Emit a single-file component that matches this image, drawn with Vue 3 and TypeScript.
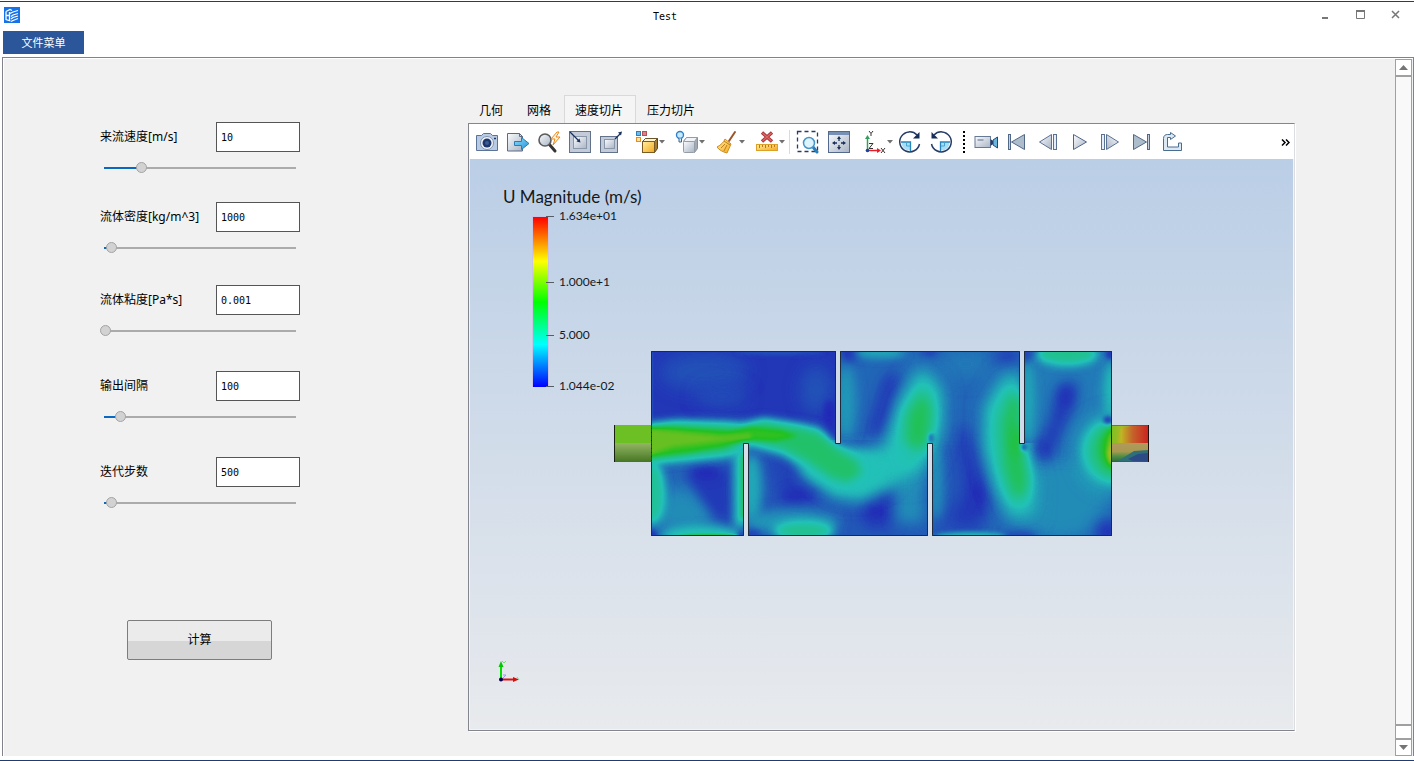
<script setup lang="ts">
import { ref } from 'vue'

interface Field {
  id: string
  label: string
  value: string
  slider: number
}

interface Tool {
  id: string
  title: string
  kind: 'plain' | 'menu' | 'rule' | 'grip'
}

interface Patch {
  d: string
  v: number
  blur: number
  clip?: string
}

const fields = ref<Field[]>([
  { id: 'velocity', label: '来流速度[m/s]', value: '10', slider: 19 },
  { id: 'density', label: '流体密度[kg/m^3]', value: '1000', slider: 3 },
  { id: 'viscosity', label: '流体粘度[Pa*s]', value: '0.001', slider: 0 },
  { id: 'interval', label: '输出间隔', value: '100', slider: 8 },
  { id: 'steps', label: '迭代步数', value: '500', slider: 3 },
])

const tabs = ['几何', '网格', '速度切片', '压力切片']
const activeTab = ref('速度切片')

const tools: Tool[] = [
  { id: 'camera', title: '截图', kind: 'plain' },
  { id: 'export', title: '导出', kind: 'plain' },
  { id: 'quick', title: '快速缩放', kind: 'plain' },
  { id: 'shrink', title: '还原视图', kind: 'plain' },
  { id: 'expand', title: '放大视图', kind: 'plain' },
  { id: 'cube', title: '显示方式', kind: 'menu' },
  { id: 'light', title: '光照', kind: 'menu' },
  { id: 'broom', title: '清除', kind: 'menu' },
  { id: 'ruler', title: '测量', kind: 'menu' },
  { id: 'rule', title: '', kind: 'rule' },
  { id: 'zoombox', title: '框选缩放', kind: 'plain' },
  { id: 'fit', title: '适应窗口', kind: 'plain' },
  { id: 'axes', title: '视图方向', kind: 'menu' },
  { id: 'cw', title: '顺时针旋转', kind: 'plain' },
  { id: 'ccw', title: '逆时针旋转', kind: 'plain' },
  { id: 'grip', title: '', kind: 'grip' },
  { id: 'video', title: '录制', kind: 'plain' },
  { id: 'first', title: '首帧', kind: 'plain' },
  { id: 'prev', title: '上一帧', kind: 'plain' },
  { id: 'play', title: '播放', kind: 'plain' },
  { id: 'next', title: '下一帧', kind: 'plain' },
  { id: 'last', title: '末帧', kind: 'plain' },
  { id: 'share', title: '循环', kind: 'plain' },
]

const legend = [
  { y: 216, text: '1.634e+01' },
  { y: 282, text: '1.000e+1' },
  { y: 335, text: '5.000' },
  { y: 386, text: '1.044e-02' },
]

const oval = (cx: number, cy: number, rx: number, ry: number): string =>
  `M${cx - rx} ${cy}a${rx} ${ry} 0 1 0 ${rx * 2} 0a${rx} ${ry} 0 1 0 ${-rx * 2} 0Z`
const box = (x: number, y: number, w: number, h: number): string => `M${x} ${y}h${w}v${h}h${-w}Z`

/* Speed as a share of the maximum; the colour map filter turns it into a hue. */
const patches: Patch[] = [
  { d: box(640, 340, 480, 210), v: 0.11, blur: 0 },
  // upper left chamber
  { d: box(640, 340, 198, 110), v: 0.035, blur: 0, clip: 't1' },
  { d: oval(704, 372, 44, 18), v: 0.08, blur: 9, clip: 't1' },
  { d: oval(722, 396, 26, 12), v: 0.065, blur: 8, clip: 't1' },
  { d: oval(780, 352, 44, 3), v: 0.08, blur: 2, clip: 't1' },
  { d: oval(816, 390, 16, 24), v: 0.08, blur: 8, clip: 't1' },
  { d: oval(829, 412, 4, 12), v: 0.005, blur: 3, clip: 't1' },
  { d: box(649, 350, 3, 70), v: 0.12, blur: 1, clip: 't1' },
  // lower left chamber
  { d: oval(684, 512, 34, 24), v: 0.17, blur: 8, clip: 'b1' },
  { d: 'M684 470L730 466L732 522L716 520L698 496Z', v: 0.04, blur: 6, clip: 'b1' },
  { d: oval(706, 473, 14, 6), v: 0.01, blur: 5, clip: 'b1' },
  { d: oval(652, 492, 13, 32), v: 0.3, blur: 4, clip: 'b1' },
  { d: box(735, 450, 12, 76), v: 0.28, blur: 4, clip: 'b1' },
  { d: box(741, 452, 8, 66), v: 0.4, blur: 2, clip: 'b1' },
  { d: oval(702, 536, 40, 10), v: 0.26, blur: 4, clip: 'b1' },
  { d: oval(708, 537, 32, 3), v: 0.48, blur: 1, clip: 'b1' },
  { d: oval(652, 535, 5, 5), v: 0.03, blur: 2, clip: 'b1' },
  { d: oval(742, 535, 4, 4), v: 0.06, blur: 2, clip: 'b1' },
  // lower middle chamber
  { d: box(746, 440, 182, 100), v: 0.09, blur: 0, clip: 'b2' },
  { d: 'M766 452L786 460L826 492L806 504L782 508Z', v: 0.05, blur: 7, clip: 'b2' },
  { d: oval(797, 495, 15, 6), v: 0.02, blur: 5, clip: 'b2' },
  { d: oval(752, 488, 10, 34), v: 0.21, blur: 5, clip: 'b2' },
  { d: oval(792, 522, 48, 12), v: 0.19, blur: 6, clip: 'b2' },
  { d: oval(804, 531, 30, 9), v: 0.32, blur: 5, clip: 'b2' },
  { d: oval(850, 500, 28, 8), v: 0.1, blur: 6, clip: 'b2' },
  { d: oval(877, 512, 16, 16), v: 0.02, blur: 8, clip: 'b2' },
  { d: oval(886, 494, 9, 9), v: 0.04, blur: 6, clip: 'b2' },
  { d: box(896, 455, 28, 68), v: 0.17, blur: 7, clip: 'b2' },
  { d: oval(752, 535, 9, 5), v: 0.05, blur: 3, clip: 'b2' },
  // upper middle chamber
  { d: oval(846, 402, 10, 38), v: 0.19, blur: 6, clip: 't2' },
  { d: oval(850, 352, 10, 9), v: 0.03, blur: 4, clip: 't2' },
  { d: 'M886 376L902 374L894 418L880 436L868 434L876 410Z', v: 0.02, blur: 7, clip: 't2' },
  { d: oval(880, 352, 26, 6), v: 0.22, blur: 4, clip: 't2' },
  { d: oval(930, 352, 8, 4), v: 0.01, blur: 4, clip: 't2' },
  { d: oval(966, 364, 28, 14), v: 0.14, blur: 9, clip: 't2' },
  { d: oval(1008, 358, 12, 9), v: 0.03, blur: 7, clip: 't2' },
  // lower right chamber
  { d: box(932, 445, 50, 90), v: 0.09, blur: 5, clip: 'b3' },
  { d: 'M956 425L970 430L984 470L992 500L978 528L944 526L964 490Z', v: 0.035, blur: 8, clip: 'b3' },
  { d: oval(980, 492, 5, 14), v: 0.01, blur: 5, clip: 'b3' },
  { d: oval(936, 484, 8, 36), v: 0.17, blur: 5, clip: 'b3' },
  { d: oval(972, 537, 36, 5), v: 0.24, blur: 2, clip: 'b3' },
  { d: oval(1060, 496, 50, 44), v: 0.17, blur: 9, clip: 'b3' },
  { d: oval(1020, 536, 16, 5), v: 0.04, blur: 4, clip: 'b3' },
  { d: oval(1108, 532, 12, 12), v: 0.02, blur: 7, clip: 'b3' },
  // upper right chamber
  { d: box(1024, 350, 90, 104), v: 0.14, blur: 7, clip: 't3' },
  { d: 'M1058 388L1078 382L1072 408L1058 440L1048 462L1036 456L1052 414Z', v: 0.03, blur: 7, clip: 't3' },
  { d: oval(1066, 396, 6, 12), v: 0.02, blur: 6, clip: 't3' },
  { d: oval(1042, 448, 6, 9), v: 0.03, blur: 6, clip: 't3' },
  { d: oval(1028, 402, 7, 42), v: 0.21, blur: 5, clip: 't3' },
  { d: oval(1067, 354, 31, 11), v: 0.32, blur: 5, clip: 't3' },
  { d: oval(1025, 353, 8, 8), v: 0.05, blur: 4, clip: 't3' },
  { d: oval(1112, 392, 9, 30), v: 0.24, blur: 5, clip: 't3' },
  { d: oval(1110, 354, 4, 5), v: 0.03, blur: 2, clip: 't3' },
  // second pass of the jet
  { d: 'M920 360L944 384L944 430L934 460L916 484L892 484L882 450L896 400Z', v: 0.2, blur: 9 },
  { d: 'M922 374L938 392L939 422L930 452L914 470L892 470L892 440L901 406Z', v: 0.28, blur: 7 },
  { d: 'M922 392L931 408L928 440L918 450L906 444L908 414Z', v: 0.41, blur: 6 },
  { d: oval(931, 438, 2, 5), v: 0.04, blur: 2 },
  { d: 'M1004 368L1020 366L1024 440L1038 484L1036 520L1010 526L992 486L982 448L984 402Z', v: 0.2, blur: 9, clip: 'mid' },
  { d: 'M1004 384L1020 378L1022 440L1033 484L1030 510L1012 512L998 486L988 448L988 410Z', v: 0.28, blur: 7, clip: 'mid' },
  { d: 'M1010 396L1020 396L1022 446L1027 474L1025 494L1014 498L1004 466L1002 422Z', v: 0.41, blur: 6, clip: 'mid' },
  { d: oval(1016, 442, 4, 16), v: 0.48, blur: 5, clip: 'mid' },
  { d: oval(1024, 447, 3, 4), v: 0.05, blur: 2 },
  // jet entering from the inlet
  { d: 'M812 448L850 450L904 444L910 466L892 488L860 502L832 496L800 474Z', v: 0.25, blur: 7, clip: 'mid2' },
  { d: 'M640 424L676 420L728 421L742 422L764 418L800 423L820 427L834 444L858 452L878 458L882 474L862 490L838 492L812 476L784 456L748 446L740 456L690 461L640 465Z', v: 0.25, blur: 4 },
  { d: 'M640 428L676 424L728 426L742 428L764 422L800 428L820 434L838 450L856 460L862 472L848 482L832 478L806 460L782 448L748 440L726 452L690 456L640 461Z', v: 0.38, blur: 4 },
  { d: 'M640 428L668 427L728 431L752 427L780 430L798 436L776 441L744 440L722 447L690 452L640 458Z', v: 0.52, blur: 2 },
  { d: 'M640 428L670 431L722 436L750 434L752 438L722 441L672 447L640 458Z', v: 0.61, blur: 2 },
  // outflow
  { d: oval(1112, 452, 36, 40), v: 0.22, blur: 8 },
  { d: oval(1114, 451, 30, 31), v: 0.3, blur: 5 },
  { d: oval(1114, 450, 19, 24), v: 0.41, blur: 4 },
  { d: oval(1114, 448, 11, 19), v: 0.54, blur: 3 },
  { d: 'M1113 428L1107 454L1110 464L1116 464Z', v: 0.72, blur: 2 },
  { d: oval(1108, 420, 5, 4), v: 0.04, blur: 2 },
]

const grey = (v: number): string => {
  const n = Math.round(v * 255)
  return `rgb(${n},${n},${n})`
}
</script>

<template>
  <div class="window">
    <header class="titlebar">
      <svg class="app-icon" viewBox="0 0 16 16" aria-hidden="true">
        <rect width="16" height="16" fill="#1672e8" />
        <path d="M2 4.500L6 2.500L8 3.500M2 4.500V12.500L6.500 14M2 8.500H6M5.500 5V14M6 6.500L9 5L14 3.500M7 9.500L9 8L14 6.500M7 12L9 10.500L14 9M7 14.500L9 13.500L14 11.500" fill="none" stroke="#fff" stroke-width="1.300" />
      </svg>
      <h1>Test</h1>
      <div class="window-controls">
        <button type="button" aria-label="最小化"><svg viewBox="0 0 11 11"><path d="M2 9h6" stroke="#777" stroke-width="2" /></svg></button>
        <button type="button" aria-label="最大化"><svg viewBox="0 0 11 11"><path d="M1.500 2v7.500h8V2" fill="none" stroke="#777" /><path d="M1 2h9" stroke="#777" stroke-width="2" /></svg></button>
        <button type="button" aria-label="关闭"><svg viewBox="0 0 11 11"><path d="M2 2l7 7M9 2l-7 7" stroke="#777" stroke-width="1.500" /></svg></button>
      </div>
    </header>
    <nav class="menubar"><button type="button">文件菜单</button></nav>

    <main class="panel">
      <form class="controls" @submit.prevent>
        <div class="fields">
          <div v-for="f in fields" :key="f.id" class="field">
            <label :for="f.id">{{ f.label }}</label>
            <input :id="f.id" v-model="f.value" type="text" class="value" />
            <input v-model.number="f.slider" type="range" min="0" max="100" class="slider" :aria-label="f.label" :style="{ '--fill': f.slider + '%' }" />
          </div>
        </div>
        <button type="submit" class="compute">计算</button>
      </form>

      <section class="viewer">
        <div class="tabs" role="tablist">
          <button v-for="t in tabs" :key="t" type="button" role="tab" :aria-selected="t === activeTab" :class="{ active: t === activeTab }" @click="activeTab = t">{{ t }}</button>
        </div>
        <div class="frame">
          <div class="toolbar">
            <svg class="defs" width="0" height="0" aria-hidden="true">
              <defs>
                <linearGradient id="steel" x2="1" y2="1"><stop stop-color="#fafcff" /><stop offset="1" stop-color="#a9b4c4" /></linearGradient>
                <linearGradient id="sky" x2="1" y2="1"><stop stop-color="#8fdcfa" /><stop offset="1" stop-color="#2394d8" /></linearGradient>
                <linearGradient id="gold" x2="1" y2="1"><stop stop-color="#fff0a0" /><stop offset="1" stop-color="#f5a81c" /></linearGradient>
              </defs>
            </svg>
            <template v-for="t in tools" :key="t.id">
              <span v-if="t.kind === 'rule'" class="rule"></span>
              <span v-else-if="t.kind === 'grip'" class="grip"></span>
              <button v-else type="button" :class="['tool', t.kind]" :aria-label="t.title">
                <svg class="icon" viewBox="0 0 24 24" aria-hidden="true">
                  <g v-if="t.id === 'camera'">
                    <path d="M1.500 5.500h5l2-2h7l2 2h5v15h-21z" fill="#b9cbe2" stroke="#5c7399" stroke-linejoin="round" />
                    <circle cx="12" cy="13" r="6.500" fill="#f4f7fb" stroke="#8193b0" />
                    <circle cx="12" cy="13" r="4.500" fill="#1d376c" /><circle cx="12" cy="13" r="2" fill="#3c5c94" />
                    <path d="M19 8.500h2" stroke="#1d376c" stroke-width="1.500" />
                  </g>
                  <g v-else-if="t.id === 'export'">
                    <path d="M1.500 3.500h12l3 3v14.500h-15z" fill="url(#steel)" stroke="#5d6b80" />
                    <path d="M13.500 3.500v3h3" fill="none" stroke="#5d6b80" />
                    <path d="M8.500 11.500h7v-4l7.500 6-7.500 6v-4h-7z" fill="url(#sky)" stroke="#2a7cb4" />
                  </g>
                  <g v-else-if="t.id === 'quick'">
                    <path d="M12 14l6 7" stroke="#343434" stroke-width="3" stroke-linecap="round" />
                    <circle cx="8" cy="10" r="6" fill="url(#steel)" stroke="#5c5c5c" stroke-width="1.600" />
                    <path d="M20 2l-6 7h4l-2 6 7-8h-4l3-5z" fill="#fff2d8" stroke="#e68a1d" stroke-linejoin="round" />
                  </g>
                  <g v-else-if="t.id === 'shrink'">
                    <rect x="1.500" y="1.500" width="21" height="21" fill="#c3cbd8" stroke="#63728b" />
                    <rect x="5.500" y="6.500" width="13" height="12" fill="url(#steel)" stroke="#8a97ab" />
                    <path d="M2 2l9 9" stroke="#17305e" stroke-width="1.300" /><path d="M12.500 12.500l-4-1 3-3z" fill="#17305e" />
                  </g>
                  <g v-else-if="t.id === 'expand'">
                    <rect x="1.500" y="6.500" width="17" height="16" fill="#c3cbd8" stroke="#63728b" />
                    <rect x="5.500" y="9.500" width="10" height="9" fill="url(#steel)" stroke="#8a97ab" />
                    <path d="M16 9l5-5" stroke="#17305e" stroke-width="1.300" /><path d="M23 1.500l-4 1 3 3z" fill="#17305e" />
                  </g>
                  <g v-else-if="t.id === 'cube'">
                    <rect x="1.500" y="1.500" width="4" height="4" fill="#70bce8" stroke="#2f7fb8" />
                    <rect x="7.500" y="1.500" width="4" height="4" fill="#d9828a" stroke="#b54f58" />
                    <rect x="1.500" y="7.500" width="4" height="4" fill="#ffe5a5" stroke="#e48d22" />
                    <path d="M7.500 11.500l3-3h12v10l-3 4z" fill="#a47b32" stroke="#574523" />
                    <path d="M7.500 11.500l3-3h12l-3 3z" fill="#fff3cf" stroke="#69562e" />
                    <rect x="7.500" y="11.500" width="12" height="11" fill="url(#gold)" stroke="#7a5b25" />
                  </g>
                  <g v-else-if="t.id === 'light'">
                    <circle cx="5" cy="5" r="3.500" fill="#c6eaff" stroke="#3181c8" stroke-width="1.400" />
                    <path d="M4 8.500v3.500h2.500V8.500" fill="#dce7f0" stroke="#42648a" />
                    <path d="M8.500 11.500l3-4h11v11l-3 4z" fill="#a2aab5" stroke="#87909b" />
                    <path d="M8.500 11.500l3-4h11l-3 4z" fill="#f2f4f7" stroke="#949ca6" />
                    <rect x="8.500" y="11.500" width="11" height="11" rx="1" fill="url(#steel)" stroke="#949ca6" />
                  </g>
                  <g v-else-if="t.id === 'broom'">
                    <path d="M20 2l-6 9" stroke="#9c5527" stroke-width="2" stroke-linecap="round" />
                    <path d="M10 9l6 5-4 9c-4-1-8-3-10-6 4-2 7-5 8-8z" fill="url(#gold)" stroke="#cf8b1c" />
                    <path d="M9 11l6 4M6 18l4-4M9 21l3-6" stroke="#c07e1e" fill="none" />
                  </g>
                  <g v-else-if="t.id === 'ruler'">
                    <rect x="1.500" y="14.500" width="21" height="6" fill="url(#gold)" stroke="#dda029" />
                    <path d="M4.500 15v3M7.500 15v2M10.500 15v3M13.500 15v2M16.500 15v3M19.500 15v2" stroke="#ba7920" />
                    <path d="M7 2.500l10 9M17 2.500l-10 9" stroke="#a83538" stroke-width="3.400" /><path d="M7.500 3l9 8M16.500 3l-9 8" stroke="#df6668" stroke-width="1.500" />
                  </g>
                  <g v-else-if="t.id === 'zoombox'">
                    <rect x="1.500" y="1.500" width="20" height="20" fill="none" stroke="#263b66" stroke-width="1.300" stroke-dasharray="4 3" />
                    <path d="M17 17l4 5" stroke="#287fba" stroke-width="3" stroke-linecap="round" />
                    <circle cx="13" cy="13" r="5.500" fill="#ddf3fe" stroke="#4a94c5" stroke-width="1.500" />
                  </g>
                  <g v-else-if="t.id === 'fit'">
                    <rect x="1.500" y="1.500" width="21" height="21" fill="url(#steel)" stroke="#53698e" />
                    <path d="M2 3.500h20" stroke="#7890b3" stroke-width="3" />
                    <path d="M12 8v3M12 15v3M7 13h3M14 13h3" stroke="#172e58" stroke-width="1.300" />
                    <path d="M12 6l2 3h-4zM12 20l2-3h-4zM5 13l3-2v4zM19 13l-3-2v4z" fill="#172e58" />
                  </g>
                  <g v-else-if="t.id === 'axes'">
                    <path d="M4.500 20V8" stroke="#30a05c" stroke-width="1.500" /><path d="M4.500 5l2.500 4h-5z" fill="#30a05c" />
                    <path d="M5 20.500h10" stroke="#ed1c24" stroke-width="1.500" /><path d="M18 20.500l-4-2.500v5z" fill="#ed1c24" />
                    <circle cx="4.500" cy="20.500" r="1.800" fill="#1e3f9e" />
                    <path d="M6 1l2 2.500L10 1M8 3.500V6M6 13.500h4l-4 5h4M18 18l4 5M22 18l-4 5" fill="none" stroke="#333" />
                  </g>
                  <g v-else-if="t.id === 'cw' || t.id === 'ccw'" :class="{ mirror: t.id === 'ccw' }">
                    <path d="M19 5A10 10 0 1 0 21.500 14" fill="none" stroke="#253b66" stroke-width="1.500" />
                    <path d="M21.500 2v6.500h-6.500z" fill="#172e58" />
                    <path d="M3.500 12H12v8.500C7 20.500 3.500 17 3.500 12z" fill="#a8def5" /><path d="M3 12h9.500v9" fill="none" stroke="#2785bb" stroke-width="1.300" /><path d="M8.500 12.500v3.500H12" fill="none" stroke="#45a4d4" />
                  </g>
                  <g v-else-if="t.id === 'video'">
                    <rect x="1" y="6.500" width="15.500" height="11" fill="url(#steel)" stroke="#667995" />
                    <path d="M3.500 10h6" stroke="#9ba8ba" stroke-width="2" />
                    <path d="M16.500 9l2.500 2v3l-2.500 2z" fill="#263d68" /><path d="M19 10l4.500-3v11L19 15z" fill="#6ab6dc" stroke="#244773" />
                  </g>
                  <g v-else-if="t.id === 'first' || t.id === 'last'" :class="{ mirror: t.id === 'last' }">
                    <path d="M19.500 4.500v15L6.500 12z" fill="#aebdcb" stroke="#526887" /><rect x="3.500" y="4.500" width="2" height="15" fill="#c7d1dd" stroke="#526887" />
                  </g>
                  <g v-else-if="t.id === 'prev' || t.id === 'next'" :class="{ mirror: t.id === 'next' }">
                    <path d="M15.500 4.500v15L3.500 12z" fill="url(#steel)" stroke="#5b7193" /><rect x="17.500" y="4.500" width="3" height="15" fill="#e5edf7" stroke="#5b7193" />
                  </g>
                  <g v-else-if="t.id === 'play'"><path d="M6.500 4.500v15L19.500 12z" fill="url(#steel)" stroke="#4f6588" /></g>
                  <g v-else-if="t.id === 'share'">
                    <path d="M3.500 8.500c0-3 2-4 4-4h3v-2l5 3.500-5 3.500v-2h-3v9.500h11v-4h3v7.500h-18z" fill="#dce9f3" stroke="#496d90" stroke-linejoin="round" />
                  </g>
                </svg>
                <svg v-if="t.kind === 'menu'" class="caret" viewBox="0 0 6 4" aria-hidden="true"><path d="M0 0h6L3 3.500z" fill="#707070" /></svg>
              </button>
            </template>
            <button type="button" class="more" aria-label="更多工具">
              <svg viewBox="0 0 9 7" aria-hidden="true"><path d="M1 .5l3 3-3 3M5 .5l3 3-3 3" fill="none" stroke="#000" stroke-width="1.500" /></svg>
            </button>
          </div>

          <svg class="scene" viewBox="470 159 823 570" role="img" aria-label="速度切片">
            <defs>
              <linearGradient id="rainbow" x1="0" y1="0" x2="0" y2="1">
                <stop stop-color="#f00" /><stop offset=".26" stop-color="#ff0" /><stop offset=".5" stop-color="#0f0" /><stop offset=".75" stop-color="#0ff" /><stop offset="1" stop-color="#00f" />
              </linearGradient>
              <linearGradient id="pipe" x1="0" y1="0" x2="0" y2="1"><stop stop-color="#93b663" /><stop offset="1" stop-color="#467623" /></linearGradient>
              <linearGradient id="hot"><stop stop-color="#6cc024" /><stop offset=".25" stop-color="#c0b524" /><stop offset=".55" stop-color="#c4642a" /><stop offset="1" stop-color="#cc2020" /></linearGradient>
              <linearGradient id="warm" x1="0" y1="0" x2="0" y2="1"><stop stop-color="#b09a5c" /><stop offset=".45" stop-color="#a89850" /><stop offset=".7" stop-color="#4f8f45" /><stop offset="1" stop-color="#30683c" /></linearGradient>
              <filter id="map" x="0" y="0" width="1" height="1" color-interpolation-filters="sRGB">
                <feComponentTransfer>
                  <feFuncR type="table" tableValues=".13 .13 .13 .75 .78" />
                  <feFuncG type="table" tableValues=".13 .76 .76 .75 .13" />
                  <feFuncB type="table" tableValues=".72 .72 .13 .13 .13" />
                </feComponentTransfer>
              </filter>
              <filter v-for="n in 9" :id="'blur' + n" :key="n" filterUnits="userSpaceOnUse" x="600" y="300" width="560" height="290" color-interpolation-filters="sRGB"><feGaussianBlur :stdDeviation="n" /></filter>
              <clipPath id="t1"><rect x="640" y="340" width="198" height="110" /></clipPath>
              <clipPath id="t2"><rect x="838" y="340" width="184" height="120" /></clipPath>
              <clipPath id="t3"><rect x="1022" y="340" width="100" height="150" /></clipPath>
              <clipPath id="b1"><rect x="640" y="440" width="106" height="100" /></clipPath>
              <clipPath id="b2"><rect x="746" y="440" width="184" height="100" /></clipPath>
              <clipPath id="b3"><path d="M930 400H1022V440H1122V540H930Z" /></clipPath>
              <clipPath id="mid"><path d="M840 340H1022V443H1122V540H840Z" /></clipPath>
              <clipPath id="mid2"><path d="M746 443H838V400H930V540H746Z" /></clipPath>
              <clipPath id="body"><path d="M651 351H836V443H840V351H1020V443H1024V351H1112V536H932V443H928V536H748V443H744V536H651Z" /></clipPath>
            </defs>

            <g class="legend">
              <text x="503" y="203" class="legend-title">U Magnitude (m/s)</text>
              <rect x="532" y="216" width="17" height="171" fill="#c9c4e6" />
              <rect x="533" y="217" width="15" height="170" fill="url(#rainbow)" />
              <g v-for="l in legend" :key="l.text">
                <path :d="`M546 ${l.y + 0.5}h8`" stroke="#555e66" />
                <text x="559" :y="l.y + 4">{{ l.text }}</text>
              </g>
            </g>

            <g clip-path="url(#body)">
              <g filter="url(#map)">
                <g v-for="(p, i) in patches" :key="i" :clip-path="p.clip ? `url(#${p.clip})` : undefined">
                  <path :d="p.d" :fill="grey(p.v)" :filter="p.blur ? `url(#blur${p.blur})` : undefined" />
                </g>
              </g>
            </g>
            <path d="M836 352h4v91h-4zM1020 352h4v91h-4z" fill="#cfdbe8" /><path d="M744 444h4v92h-4zM928 444h4v92h-4z" fill="#d6dfe9" />
            <path d="M651.500 351.500H835.500V443.500H840.500V351.500H1019.500V443.500H1024.500V351.500H1111.500V535.500H932.500V443.500H927.500V535.500H748.500V443.500H743.500V535.500H651.500Z" fill="none" stroke="#1d2c3c" />

            <rect x="614" y="425" width="37" height="18" fill="#6cc024" />
            <rect x="614" y="443" width="37" height="19" fill="url(#pipe)" />
            <path d="M614.500 425v37" stroke="#182010" />
            <path d="M651.500 425v37" stroke="#2d4a18" stroke-dasharray="3 1" />
            <rect x="1112" y="425" width="37" height="18" fill="url(#hot)" />
            <path d="M1112 425h22l-14 4-5 14h-3z" fill="#8fc024" opacity=".6" />
            <rect x="1112" y="443" width="37" height="19" fill="url(#warm)" />
            <path d="M1116 462l10-6 8-5 15-1v12z" fill="#2f6f78" /><path d="M1128 459l10-5 11-1v9l-16-1z" fill="#2c4a86" />
            <path d="M1112 425.500h37M1112 461.500h37" stroke="#58502c" opacity=".6" />
            <path d="M1148.500 425v37" stroke="#1c1010" /><path d="M1111.500 425v37" stroke="#22301a" stroke-dasharray="3 1" />

            <path d="M501 679v-13" stroke="#00e000" stroke-width="2" /><path d="M501 661l2.500 6h-5z" fill="#00c800" />
            <path d="M501 679.500h14" stroke="#e01010" stroke-width="2" /><path d="M519 679.500l-6-2.500v5z" fill="#d01010" />
            <path d="M502 661l2 2 2-2M517 677l2 3" stroke="#70e070" fill="none" /><path d="M503 675h3l-3 3" fill="none" stroke="#9a9af0" />
            <circle cx="501" cy="679.500" r="2" fill="#000050" />
          </svg>
        </div>
      </section>

      <div class="scrollbar" aria-hidden="true">
        <button type="button" tabindex="-1"><svg viewBox="0 0 9 5"><path d="M4.500 0L9 5H0z" fill="#757575" /></svg></button>
        <div class="track"></div>
        <div class="page"></div>
        <button type="button" tabindex="-1"><svg viewBox="0 0 9 5"><path d="M0 0h9L4.500 5z" fill="#757575" /></svg></button>
      </div>
    </main>
  </div>
</template>

<style>
body {
  margin: 0;
}
</style>

<style scoped>
.window {
  box-sizing: border-box;
  height: 100vh;
  min-height: 600px;
  padding-top: 1px;
  display: flex;
  flex-direction: column;
  background: #fff;
  border-bottom: 1px solid #1f3d70;
  font: 12px/16px "Noto Sans", "Noto Sans CJK SC", sans-serif;
  color: #000;
}
button,
input {
  font: inherit;
  color: inherit;
  margin: 0;
  padding: 0;
}
.titlebar {
  border-top: 1px solid #1f3d70;
  height: 29px;
  display: grid;
  grid-template-columns: 1fr auto 1fr;
  align-items: center;
  flex: none;
}
.app-icon {
  width: 16px;
  height: 16px;
  margin: 0 0 4px 4px;
}
h1 {
  margin: 0 84px 0 0;
  font: 10px/16px "DejaVu Sans Mono", monospace;
}
.window-controls {
  display: flex;
  justify-content: flex-end;
  gap: 24px;
  padding: 0 13px 4px 0;
}
.window-controls button {
  width: 11px;
  height: 11px;
  border: 0;
  background: none;
}
.window-controls svg {
  display: block;
  width: 11px;
  height: 11px;
}
.menubar {
  flex: none;
  height: 26px;
  padding-left: 3px;
}
.menubar button {
  width: 81px;
  height: 23px;
  border: 0;
  background: #2b579a;
  color: #fff;
  font-size: 11px;
  display: block;
}
.panel {
  flex: 1;
  min-height: 0;
  display: flex;
  margin: 0 0 4px 2px;
  border: 1px solid #80838c;
  border-bottom: 0;
  background: #f1f1f1;
  box-shadow: inset 1px 1px #fff;
}
.controls {
  box-sizing: border-box;
  flex: none;
  width: 465px;
  padding: 64px 0 0 97px;
}
.fields {
  display: grid;
  grid-template-rows: 80px 83px 86px 86px 86px;
}
.field {
  display: grid;
  grid-template-columns: 116px 84px;
  grid-template-rows: 30px 31px;
  align-items: center;
  align-content: start;
}
.value {
  box-sizing: border-box;
  width: 84px;
  height: 30px;
  padding-left: 4px;
  border: 1px solid #555;
  border-radius: 0;
  background: #fff;
  font: 10px/16px "DejaVu Sans Mono", monospace;
}
.slider {
  grid-column: 1 / 3;
  width: 200px;
  height: 12px;
  appearance: none;
  background:
    linear-gradient(to right, #0b68c1 var(--fill), #ababab var(--fill)) center / 192px 2px no-repeat;
}
.slider::-webkit-slider-thumb {
  appearance: none;
  box-sizing: border-box;
  width: 11px;
  height: 11px;
  border: 1px solid #a3a3a3;
  border-radius: 50%;
  background: #d2d2d2;
}
.compute {
  width: 145px;
  height: 40px;
  margin: 77px 0 0 27px;
  border: 1px solid #7d7d7d;
  border-radius: 2px;
  background: linear-gradient(#ebebeb 52%, #d6d6d6 52%);
}
.viewer {
  flex: 1;
  min-width: 0;
  display: flex;
  flex-direction: column;
  padding: 37px 100px 25px 0;
}
.tabs {
  flex: none;
  display: flex;
  height: 28px;
}
.tabs button {
  padding: 2px 12px 0 10px;
  border: 1px solid transparent;
  border-bottom: 0;
  background: none;
}
.tabs .active {
  border-color: #d9d9d9;
  background: #f5f5f5;
}
.frame {
  flex: 1;
  min-height: 0;
  display: flex;
  flex-direction: column;
  border: 1px solid #83868e;
  border-right-color: #dcdde0;
  background: #f4f4f4;
  box-shadow: 1px 1px #fff;
}
.toolbar {
  flex: none;
  display: flex;
  align-items: center;
  height: 35px;
  padding-left: 2px;
  background: #fff;
}
.defs {
  position: absolute;
}
.tool {
  display: flex;
  align-items: center;
  justify-content: center;
  flex: none;
  width: 31px;
  height: 32px;
  border: 0;
  background: none;
}
.tool.menu {
  width: 40px;
  justify-content: flex-end;
  padding-right: 1px;
}
.icon {
  flex: none;
  width: 24px;
  height: 24px;
}
.caret {
  width: 6px;
  height: 4px;
}
.mirror {
  transform: translateX(24px) scaleX(-1);
}
.rule {
  width: 1px;
  height: 24px;
  margin: 0 2px 0 3px;
  background: #dadada;
}
.grip {
  width: 2px;
  height: 22px;
  margin: 0 5px 0 7px;
  background: repeating-linear-gradient(#000 0 2px, transparent 2px 4px);
}
.more {
  width: 9px;
  margin: 1px 4px 0 auto;
  border: 0;
  background: none;
}
.more svg {
  display: block;
  width: 9px;
  height: 7px;
}
.scene {
  flex: 1;
  min-height: 0;
  margin: 0 1px 1px;
  background: linear-gradient(#bacee6, #e8eaed);
}
.legend text {
  font: 12px "Lato", sans-serif;
  fill: #15181c;
}
.legend .legend-title {
  font-size: 17px;
}
.scrollbar {
  flex: none;
  box-sizing: border-box;
  width: 17px;
  margin: 1px 1px 0 0;
  display: flex;
  flex-direction: column;
  border: 1px solid #a0a0a0;
  background: #fff;
}
.scrollbar button {
  flex: none;
  height: 15px;
  border: 0;
  background: #fff;
  display: flex;
  align-items: center;
  justify-content: center;
}
.scrollbar svg {
  width: 9px;
  height: 5px;
}
.track {
  flex: 1;
  border: solid #a0a0a0;
  border-width: 2px 0;
  background: #f9f9f9;
}
.page {
  height: 12px;
  border-bottom: 2px solid #a0a0a0;
}
</style>
